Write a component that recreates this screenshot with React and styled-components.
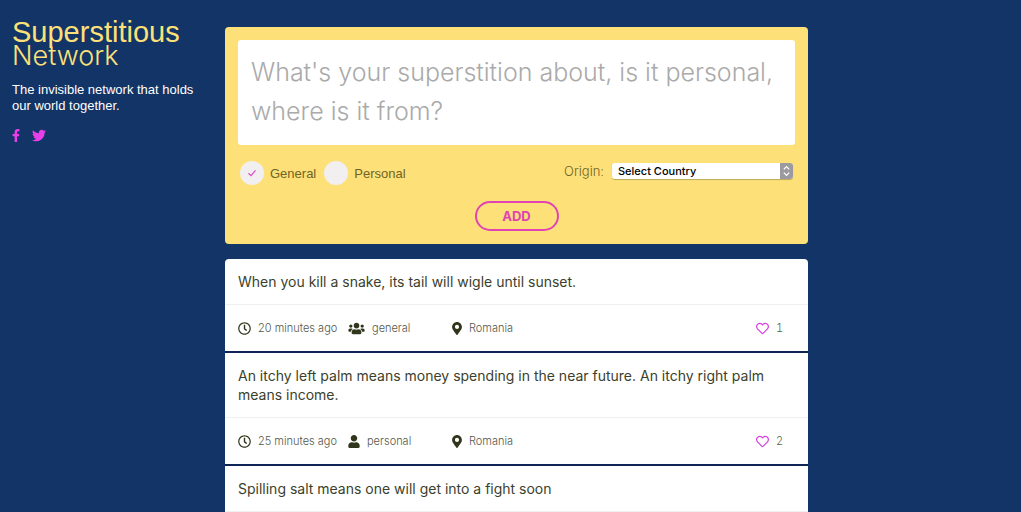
import React, { useState } from "react"
import styled, { createGlobalStyle } from "styled-components"
import {
    FaFacebookF,
    FaTwitter,
    FaRegClock,
    FaUsers,
    FaUser,
    FaMapMarkerAlt,
    FaRegHeart,
} from "react-icons/fa"

const GlobalStyle = createGlobalStyle`
    * {
        box-sizing: border-box;
    }
    body {
        margin: 0;
        background-color: #133466;
        font-family: "Liberation Sans", Arial, sans-serif;
    }
`
const Page = styled.div`
    display: grid;
    grid-template-columns: 213px minmax(0, 1fr) 201px;
    column-gap: 12px;
    min-height: 100vh;
`
const Sidebar = styled.header`
    padding: 20px 0 0 12px;
`
const Title = styled.h1`
    margin: 0;
    color: #fde178;
    font-size: 29px;
    line-height: 24px;
    font-weight: 400;
`
const TitleLight = styled.span`
    display: block;
    font-family: Inter, sans-serif;
    font-size: 27px;
    font-weight: 300;
`
const Tagline = styled.p`
    margin: 14px 0 14px;
    color: #fff;
    font-size: 13px;
    line-height: 16px;
`
const Social = styled.nav`
    display: flex;
    align-items: center;
    gap: 12px;
`
const SocialLink = styled.a`
    display: flex;
    color: #e83fe8;
    svg {
        width: ${(props) => props.$width}px;
        height: 15px;
    }
`
const Main = styled.main`
    padding-top: 27px;
`
const Form = styled.form`
    padding: 13px;
    margin-bottom: 15px;
    border-radius: 4px;
    background-color: #fde178;
`
const TextArea = styled.textarea`
    display: block;
    width: 100%;
    height: 105px;
    padding: 13px;
    border: none;
    border-radius: 3px;
    resize: none;
    overflow: hidden;
    outline: none;
    color: #373d20;
    font-family: Inter, sans-serif;
    font-size: 25px;
    line-height: 39px;
    font-weight: 300;
    &::placeholder {
        color: #aaa;
        opacity: 1;
    }
`
const Options = styled.div`
    display: flex;
    justify-content: space-between;
    padding: 0 2px;
    margin: 16px 0;
`
const Choices = styled.div`
    display: flex;
    gap: 8px;
`
const Choice = styled.label`
    position: relative;
    display: flex;
    align-items: center;
    gap: 6px;
    color: #716325;
    font-size: 13px;
    cursor: pointer;
`
const Radio = styled.input`
    appearance: none;
    width: 24px;
    height: 24px;
    margin: 0;
    border-radius: 50%;
    background-color: #f1eff0;
    cursor: pointer;
`
const Check = styled.svg`
    position: absolute;
    top: 8px;
    left: 8px;
    width: 8px;
    height: 8px;
    pointer-events: none;
`
const Origin = styled.div`
    display: flex;
    align-items: center;
    gap: 8px;
    height: 20px;
    color: #716325;
    font-family: Inter, sans-serif;
    font-size: 13px;
    font-weight: 300;
`
const SelectBox = styled.div`
    position: relative;
    display: flex;
    width: 181px;
    height: 16px;
    border-radius: 3px;
    overflow: hidden;
    box-shadow: 0 1px 1px rgba(0, 0, 0, 0.25);
`
const Select = styled.select`
    appearance: none;
    width: 100%;
    padding: 0 20px 0 6px;
    border: none;
    outline: none;
    background-color: #fff;
    color: #000;
    font-family: "Liberation Sans", Arial, sans-serif;
    font-family: Inter, sans-serif;
    font-size: 11px;
    line-height: 16px;
    font-weight: 500;
`
const Arrows = styled.svg`
    position: absolute;
    top: 0;
    right: 0;
    width: 13px;
    height: 16px;
    background-color: #9b9b9f;
    pointer-events: none;
`
const AddButton = styled.button`
    display: block;
    width: 84px;
    height: 30px;
    margin: 0 auto;
    border: 2px solid #e044b4;
    border-radius: 15px;
    background-color: transparent;
    color: #e044b4;
    font-family: Inter, sans-serif;
    font-size: 13px;
    font-weight: 700;
    cursor: pointer;
`
const List = styled.ul`
    display: flex;
    flex-direction: column;
    gap: 2px;
    margin: 0;
    padding: 0;
    list-style: none;
    border-radius: 4px 4px 0 0;
    overflow: hidden;
    background-color: #0f2557;
`
const Post = styled.li`
    background-color: #fff;
`
const PostText = styled.p`
    margin: 0;
    padding: 13px;
    border-bottom: 1px solid #efefef;
    color: #3b3f2c;
    font-family: Inter, sans-serif;
    font-size: 14px;
    line-height: 19px;
`
const Meta = styled.div`
    display: grid;
    grid-template-columns: 110px 104px 1fr auto;
    align-items: center;
    height: 46px;
    padding: 0 25px 0 13px;
    color: #55584a;
    font-family: Inter, sans-serif;
    font-size: 11px;
    font-weight: 300;
`
const MetaItem = styled.span`
    display: flex;
    align-items: center;
    gap: 7px;
    white-space: nowrap;
    svg {
        width: ${(props) => props.$width}px;
        height: 13px;
        color: #30361c;
    }
`
const LikeButton = styled.button`
    display: flex;
    align-items: center;
    gap: 7px;
    padding: 0;
    border: none;
    background: none;
    color: #4f6a3c;
    font: inherit;
    font-variant-numeric: tabular-nums;
    cursor: pointer;
    svg {
        width: 13px;
        height: 13px;
        color: #d63fe0;
    }
`

const posts = [
    { text: "When you kill a snake, its tail will wigle until sunset.", time: "20 minutes ago", type: "general", country: "Romania", likes: 1 },
    { text: "An itchy left palm means money spending in the near future. An itchy right palm means income.", time: "25 minutes ago", type: "personal", country: "Romania", likes: 2 },
    { text: "Spilling salt means one will get into a fight soon" },
]

function Option ({ value, label, selected, onSelect }) {
    const checked = selected === value
    return (
        <Choice>
            <Radio type="radio" name="type" value={value} checked={checked} onChange={() => onSelect(value)} />
            {checked && (
                <Check viewBox="0 0 8 8" fill="none" stroke="#e044c8" strokeWidth="1.2">
                    <path d="M0.5 4.2 L3 6.6 L7.6 1.4" />
                </Check>
            )}
            {label}
        </Choice>
    )
}

function AddForm () {
    const [type, setType] = useState("general")
    return (
        <Form onSubmit={(e) => e.preventDefault()}>
            <TextArea
                aria-label="Superstition"
                placeholder="What's your superstition about, is it personal, where is it from?"
            />
            <Options>
                <Choices>
                    <Option value="general" label="General" selected={type} onSelect={setType} />
                    <Option value="personal" label="Personal" selected={type} onSelect={setType} />
                </Choices>
                <Origin>
                    <label htmlFor="origin">Origin:</label>
                    <SelectBox>
                        <Select id="origin">
                            <option>Select Country</option>
                        </Select>
                        <Arrows viewBox="0 0 13 16" fill="none" stroke="#fff" strokeWidth="1.3">
                            <path d="M3.8 6.4 L6.5 3.6 L9.2 6.4 M3.8 9.6 L6.5 12.4 L9.2 9.6" />
                        </Arrows>
                    </SelectBox>
                </Origin>
            </Options>
            <AddButton type="submit">ADD</AddButton>
        </Form>
    )
}

function PostItem ({ post }) {
    const general = post.type === "general"
    return (
        <Post>
            <PostText>{post.text}</PostText>
            {post.time && (
                <Meta>
                    <MetaItem $width={13}><FaRegClock /> {post.time}</MetaItem>
                    <MetaItem $width={general ? 17 : 12}>
                        {general ? <FaUsers /> : <FaUser />} {post.type}
                    </MetaItem>
                    <MetaItem $width={10}><FaMapMarkerAlt /> {post.country}</MetaItem>
                    <LikeButton type="button" aria-label="Like"><FaRegHeart /> {post.likes}</LikeButton>
                </Meta>
            )}
        </Post>
    )
}

export default function App () {
    return (
        <Page>
            <GlobalStyle />
            <Sidebar>
                <Title>
                    Superstitious
                    <TitleLight>Network</TitleLight>
                </Title>
                <Tagline>The invisible network that holds our world together.</Tagline>
                <Social>
                    <SocialLink href="#" aria-label="Facebook" $width={8}><FaFacebookF /></SocialLink>
                    <SocialLink href="#" aria-label="Twitter" $width={14}><FaTwitter /></SocialLink>
                </Social>
            </Sidebar>
            <Main>
                <AddForm />
                <List>
                    {posts.map((post) => <PostItem key={post.text} post={post} />)}
                </List>
            </Main>
        </Page>
    )
}
